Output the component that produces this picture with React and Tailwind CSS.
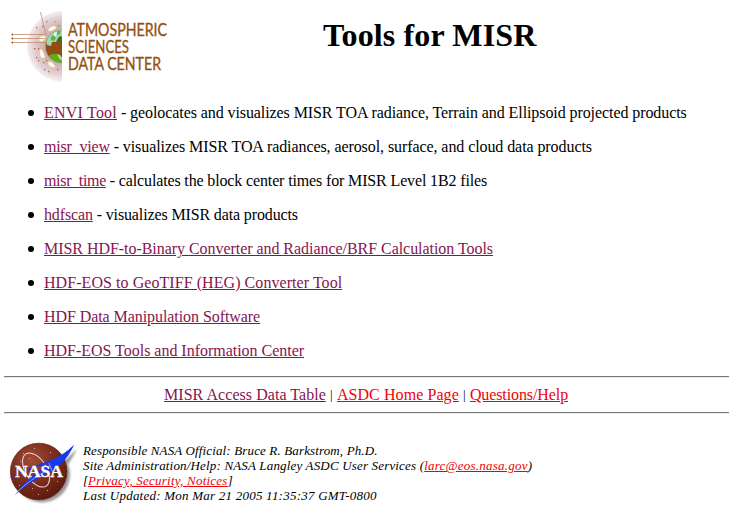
const TOOLS = [
  { name: 'ENVI Tool', nameTracking: 'tracking-[0.22px]', rest: ' - geolocates and visualizes MISR TOA radiance, Terrain and Ellipsoid projected products', restTracking: 'tracking-[-0.083px]' },
  { name: 'misr_view', nameTracking: 'tracking-[-0.2px]', rest: ' - visualizes MISR TOA radiances, aerosol, surface, and cloud data products', restTracking: 'tracking-[-0.08px]' },
  { name: 'misr_time', nameTracking: 'tracking-[-0.33px]', rest: ' - calculates the block center times for MISR Level 1B2 files', restTracking: 'tracking-[-0.14px]' },
  { name: 'hdfscan', nameTracking: 'tracking-[-0.14px]', rest: ' - visualizes MISR data products', restTracking: 'tracking-[-0.13px]' },
  { name: 'MISR HDF-to-Binary Converter and Radiance/BRF Calculation Tools', nameTracking: 'tracking-[-0.045px]' },
  { name: 'HDF-EOS to GeoTIFF (HEG) Converter Tool', nameTracking: 'tracking-[0.06px]' },
  { name: 'HDF Data Manipulation Software', nameTracking: 'tracking-[-0.07px]' },
  { name: 'HDF-EOS Tools and Information Center', nameTracking: 'tracking-[-0.02px]' },
];

function Visited({ className = '', children }) {
  return <a href="#" className={`text-[#86144f] underline ${className}`}>{children}</a>;
}

function Link({ className = '', children }) {
  return <a href="#" className={`text-[#f00008] underline ${className}`}>{children}</a>;
}

function Rule() {
  return <div className="ml-[4px] mr-[6px] h-[2px] shrink-0 border-t border-b border-l border-t-[#777] border-b-[#ececec] border-l-[#aaa]" />;
}

function Separator() {
  return <span className="w-[11px] text-center text-[13px] leading-[18px]">|</span>;
}

function AsdcLogo() {
  return (
    <svg width="210" height="88" viewBox="0 0 210 88" className="block shrink-0">
      <defs>
        <radialGradient id="haze" gradientUnits="userSpaceOnUse" cx="62" cy="46" r="36">
          <stop offset="0" stopColor="#c9a9a2" />
          <stop offset="0.55" stopColor="#d0b4b1" />
          <stop offset="0.8" stopColor="#e3d2d6" />
          <stop offset="1" stopColor="#f8f3f6" />
        </radialGradient>
        <clipPath id="globe"><path d="M62 30A16.5 16.5 0 0 0 62 63Z" /></clipPath>
      </defs>
      <path d="M62 11C42 12 27 27 27 46C27 65 42 81 62 82Z" fill="url(#haze)" />
      <g fill="#fffdf2" stroke="#f5dfb4" strokeWidth="0.7">
        <path d="M48 30Q50 26 55 26Q57 29 53 30Q49 32 48 30Z" />
        <path d="M39 39Q41 35 45 36Q46 39 43 41Q39 42 39 39Z" />
        <path d="M40 50Q42 48 43 52L45 57Q42 60 40 55Z" />
        <path d="M48 62Q52 61 54 65Q57 68 52 67Q48 66 48 62Z" />
      </g>
      <g fill="#a66a4b">
        <rect x="36" y="27" width="1.3" height="1.3" /><rect x="42" y="26" width="1.3" height="1.3" />
        <rect x="46" y="21" width="1.3" height="1.3" /><rect x="54" y="21" width="1.3" height="1.3" />
        <rect x="58" y="25" width="1.3" height="1.3" /><rect x="34" y="48" width="1.3" height="1.3" />
        <rect x="36" y="57" width="1.3" height="1.3" /><rect x="38" y="60" width="1.3" height="1.3" />
        <rect x="43" y="62" width="1.3" height="1.3" /><rect x="46" y="60" width="1.3" height="1.3" />
        <rect x="44" y="69" width="1.3" height="1.3" /><rect x="48" y="71" width="1.3" height="1.3" />
        <rect x="57" y="69" width="1.3" height="1.3" /><rect x="38" y="48" width="1.3" height="1.3" />
      </g>
      <g fill="#f1cd8e">
        <rect x="49" y="19" width="1.5" height="1.5" /><rect x="53" y="21" width="1.5" height="1.5" />
        <rect x="40" y="31" width="1.5" height="1.5" /><rect x="35" y="45" width="1.5" height="1.5" />
        <rect x="41" y="66" width="1.5" height="1.5" /><rect x="49" y="73" width="1.5" height="1.5" />
        <rect x="52" y="72" width="1.5" height="1.5" />
      </g>
      <g clipPath="url(#globe)">
        <rect x="44" y="28" width="18" height="36" fill="#914d12" />
        <path d="M62 29Q50 30 46 41L47 45L51 46L52 42L56 42L58 38L60 36L62 37Z" fill="#9fd8b5" />
        <path d="M57 31L61 30L60 34L57 35ZM51 37L53 35L56 38L54 41L51 40Z" fill="#63b536" />
        <path d="M54 33L57 32L56 36L54 36Z" fill="#f6faf3" />
        <path d="M61 36V43L59 42L58 39Z" fill="#267a20" />
        <path d="M48 56L52 54L57 54L59 57L62 59V64Q53 64 48 56Z" fill="#5fae12" />
        <path d="M57 54L60 55L62 58V61L59 58Z" fill="#b9dfa4" />
      </g>
      <path d="M61.5 30A16.5 16.5 0 0 0 61.5 63" fill="none" stroke="#8ab58e" strokeWidth="0.7" />
      <path d="M12 34.5H45M12 38.5H45M12 42.5H46M40.5 12L46 35" stroke="#c08d70" strokeWidth="0.8" />
      <path d="M11 34.5L13 33.3V35.7ZM11 38.5L13 37.3V39.7ZM11 42.5L13 41.3V43.7Z" fill="#93501a" />
      <g fill="#94500f" stroke="#94500f" strokeWidth="0.35" className="font-['Lato'] text-[18px]">
        <text x="68" y="36" textLength="99" lengthAdjust="spacingAndGlyphs">ATMOSPHERIC</text>
        <text x="68" y="53" textLength="61" lengthAdjust="spacingAndGlyphs">SCIENCES</text>
        <text x="68" y="70" textLength="93" lengthAdjust="spacingAndGlyphs">DATA CENTER</text>
      </g>
    </svg>
  );
}

function NasaLogo() {
  return (
    <svg width="79" height="73" viewBox="0 437 79 73" className="block shrink-0">
      <defs>
        <radialGradient id="ball" cx="0.38" cy="0.3" r="0.7">
          <stop offset="0" stopColor="#a04c38" />
          <stop offset="0.5" stopColor="#803020" />
          <stop offset="1" stopColor="#5f1b10" />
        </radialGradient>
        <filter id="soft" x="-20%" y="-20%" width="140%" height="140%"><feGaussianBlur stdDeviation="1.2" /></filter>
      </defs>
      <g filter="url(#soft)" opacity="0.6">
        <circle cx="42" cy="474.5" r="28" fill="#555" />
        <path d="M77 449Q62 462 54 475L62 472Q70 463 77 449Z" fill="#555" />
      </g>
      <circle cx="38.7" cy="471.5" r="28.3" fill="url(#ball)" stroke="#571e14" strokeWidth="0.7" />
      <g fill="#d8aa9b">
        <rect x="23" y="453" width="1" height="1" /><rect x="29" y="458" width="1" height="1" />
        <rect x="50" y="452" width="1" height="1" /><rect x="20" y="461" width="1" height="1" />
        <rect x="34" y="448" width="1" height="1" /><rect x="57" y="481" width="1" height="1" />
        <rect x="32" y="488" width="1" height="1" /><rect x="38" y="494" width="1" height="1" />
        <rect x="47" y="490" width="1" height="1" /><rect x="27" y="482" width="1" height="1" />
        <rect x="40" y="458" width="1" height="1" /><rect x="19" y="485" width="1" height="1" />
      </g>
      <ellipse cx="36" cy="470" rx="10.5" ry="19" transform="rotate(-32 36 470)" fill="none" stroke="#f3ded7" strokeWidth="1" />
      <path d="M8 479Q26 468 49 461Q64 455 74 445Q67 457 55 464L43 465Q24 471 8 479Z" fill="#1739ee" />
      <path d="M74 445Q64 467 44 475Q27 484 15 495Q29 476 50 463Q64 455 74 445Z" fill="#1739ee" />
      <path d="M49 463L54 476M16 493Q32 478 46 471" fill="none" stroke="#d9c7dc" strokeWidth="0.7" />
      <text x="15" y="476.5" textLength="48" lengthAdjust="spacingAndGlyphs" fill="white" stroke="white" strokeWidth="0.3" className="font-['Liberation_Serif',serif] text-[16px] font-bold">NASA</text>
    </svg>
  );
}

export default function App() {
  return (
    <div className="flex h-[516px] w-[735px] flex-col overflow-hidden bg-white font-['Liberation_Serif',serif] text-[16px] leading-[18px] text-black">
      <header className="flex h-[104px] shrink-0 items-start">
        <AsdcLogo />
        <h1 className="ml-[113px] mt-[17px] whitespace-nowrap text-[32px] font-bold leading-[36px] tracking-[0.13px]">Tools for MISR</h1>
      </header>
      <ul className="ml-[27.5px] flex shrink-0 flex-col gap-4">
        {TOOLS.map((tool) => (
          <li key={tool.name} className="flex h-[18px] items-center whitespace-nowrap">
            <span className="mr-[10.5px] mt-[0.6px] size-[6px] rounded-full bg-black" />
            <span>
              <Visited className={tool.nameTracking}>{tool.name}</Visited>
              <span className={tool.restTracking}>{tool.rest}</span>
            </span>
          </li>
        ))}
      </ul>
      <div className="mt-4 flex shrink-0 flex-col">
        <Rule />
        <nav className="ml-[164px] flex h-[34px] items-center whitespace-nowrap">
          <Visited className="tracking-[0.05px]">MISR Access Data Table</Visited>
          <Separator />
          <Link className="tracking-[0.08px]">ASDC Home Page</Link>
          <Separator />
          <Link className="tracking-[-0.1px]">Questions/Help</Link>
        </nav>
        <Rule />
      </div>
      <footer className="mt-[23px] flex shrink-0">
        <NasaLogo />
        <address className="ml-[4px] mt-[6px] whitespace-nowrap text-[13px] italic leading-[15px]">
          <div className="tracking-[0.14px]">Responsible NASA Official: Bruce R. Barkstrom, Ph.D.</div>
          <div className="tracking-[0.17px]">Site Administration/Help: NASA Langley ASDC User Services (<Link className="tracking-[0.24px]">larc@eos.nasa.gov</Link>)</div>
          <div>[<Link className="tracking-[0.23px]">Privacy, Security, Notices</Link>]</div>
          <div className="tracking-[0.23px]">Last Updated: Mon Mar 21 2005 11:35:37 GMT-0800</div>
        </address>
      </footer>
    </div>
  );
}
